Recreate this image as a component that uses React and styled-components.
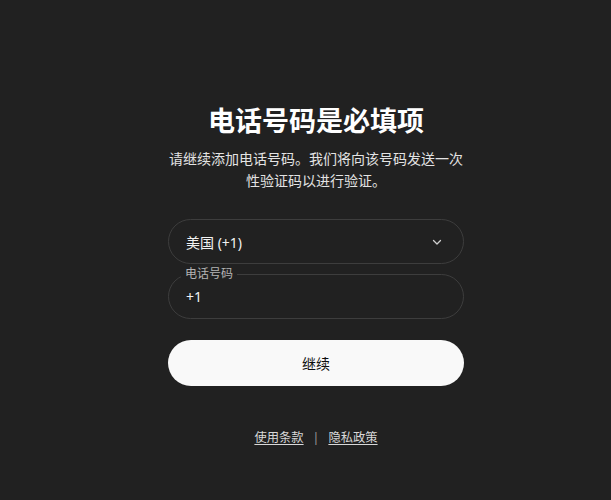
import styled, { createGlobalStyle } from "styled-components";

const GlobalStyle = createGlobalStyle`
    html, body {
        margin: 0;
        padding: 0;
        background: #212121;
    }
    body {
        font-family: "Noto Sans", "Noto Sans CJK SC", sans-serif;
        color: #ececec;
    }
`;

const Page = styled.main`
    min-height: 500px;
    display: flex;
    justify-content: center;
    padding: 101px 0 0 21px;
    box-sizing: border-box;
`;

const Column = styled.div`
    width: 296px;
    display: flex;
    flex-direction: column;
    align-items: stretch;
`;

const Title = styled.h1`
    margin: 0;
    text-align: center;
    font-size: 27px;
    line-height: 40px;
    font-weight: 600;
    color: #ffffff;
`;

const Description = styled.p`
    margin: 7px 0 0;
    text-align: center;
    font-size: 14px;
    line-height: 22px;
    color: #e3e3e3;
`;

const Form = styled.div`
    display: flex;
    flex-direction: column;
    gap: 10px;
    margin-top: 27px;
`;

const Field = styled.div`
    position: relative;
    height: 45px;
    border: 1px solid #3d3d3d;
    border-radius: 23px;
    box-sizing: border-box;
    display: flex;
    align-items: center;
    justify-content: space-between;
    padding: 0 20px 0 17px;
    font-size: 14px;
    color: #f2f2f2;
`;

const FloatLabel = styled.span`
    position: absolute;
    left: 12px;
    top: -10px;
    padding: 0 4px;
    background: #212121;
    font-size: 12px;
    line-height: 18px;
    color: #b4b4b4;
`;

const Button = styled.button`
    margin-top: 11px;
    height: 46px;
    border: none;
    border-radius: 23px;
    background: #f9f9f9;
    color: #0d0d0d;
    font-family: inherit;
    font-size: 14px;
    cursor: pointer;
`;

const Footer = styled.div`
    margin-top: 42px;
    display: flex;
    justify-content: center;
    align-items: center;
    gap: 9px;
    font-size: 12.3px;
    color: #d8d8d8;
`;

const Link = styled.a`
    color: #d8d8d8;
    text-decoration: underline;
    text-underline-offset: 2px;
`;

const Divider = styled.span`
    color: #9b9b9b;
`;

const Chevron = () => (
    <svg width="12" height="12" viewBox="0 0 12 12" fill="none">
        <path d="M2.5 4.5L6 8L9.5 4.5" stroke="#cfcfcf" strokeWidth="1.3" strokeLinecap="round" strokeLinejoin="round" />
    </svg>
);

export default function App() {
    return (
        <>
            <GlobalStyle />
            <Page>
                <Column>
                    <Title>电话号码是必填项</Title>
                    <Description>
                        请继续添加电话号码。我们将向该号码发送一次性验证码以进行验证。
                    </Description>
                    <Form>
                        <Field>
                            <span>美国 (+1)</span>
                            <Chevron />
                        </Field>
                        <Field>
                            <FloatLabel>电话号码</FloatLabel>
                            <span>+1</span>
                        </Field>
                        <Button>继续</Button>
                    </Form>
                    <Footer>
                        <Link href="#">使用条款</Link>
                        <Divider>|</Divider>
                        <Link href="#">隐私政策</Link>
                    </Footer>
                </Column>
            </Page>
        </>
    );
}
